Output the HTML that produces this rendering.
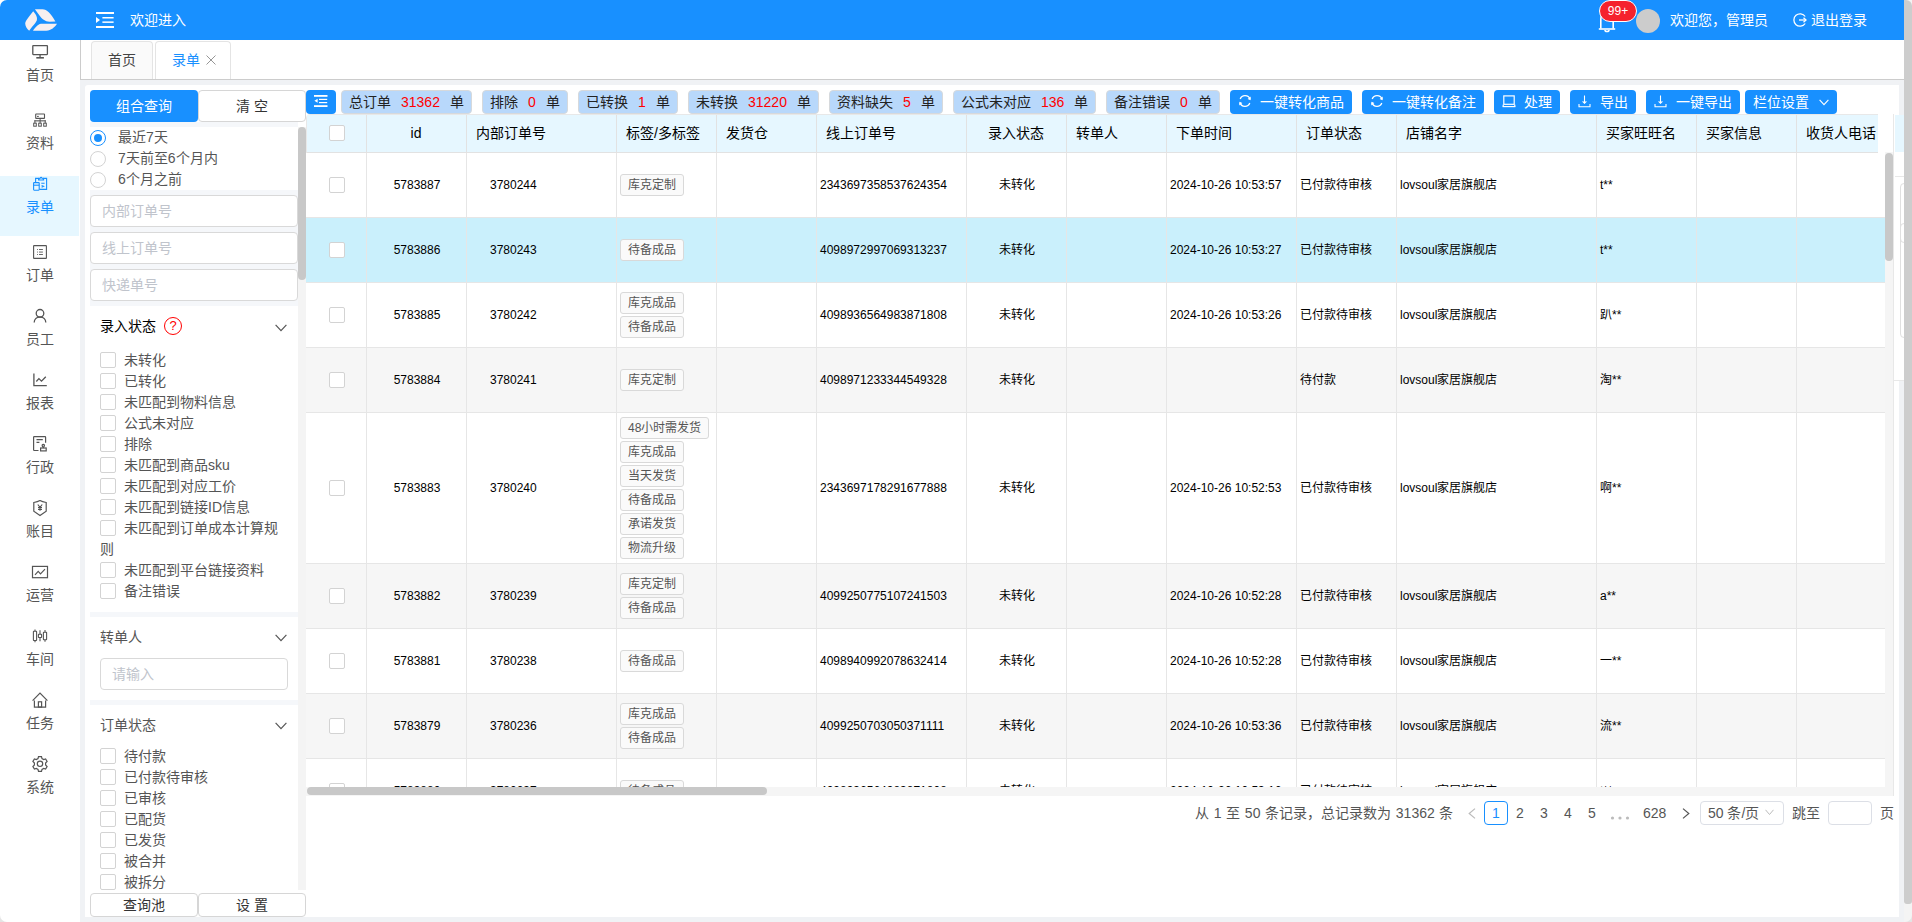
<!DOCTYPE html><html lang="zh-CN"><head><meta charset="utf-8"><style>
*{box-sizing:border-box;margin:0;padding:0}
html,body{width:1912px;height:922px;overflow:hidden}
body{position:relative;background:#f0f2f5;font-family:"Liberation Sans", sans-serif;font-size:14px;color:#333}
.a{position:absolute}
.t{position:absolute;white-space:nowrap}
.cb{position:absolute;width:16px;height:16px;border:1px solid #d3d3d3;border-radius:2px;background:#fff}
.rad{position:absolute;width:16px;height:16px;border:1px solid #d3d3d3;border-radius:50%;background:#fff}
.inp{position:absolute;border:1px solid #d9d9d9;border-radius:4px;background:#fff;color:#c0c4cc;font-size:14px}
.strip{position:absolute;background:#f5f7fa}
.tg{position:absolute;top:90px;height:24px;background:#b8d8fb;border:1px solid #d6d9dc;border-radius:4px;line-height:22px;font-size:14px;color:#222}
.tg b{font-weight:normal;color:#ff0000}
.bb{position:absolute;top:90px;height:24px;background:#1890ff;border-radius:4px;line-height:24px;font-size:14px;color:#fff}
.hd{position:absolute;top:114px;height:38px;line-height:38px;font-size:14px;color:#000}
.cell{position:absolute;font-size:12px;color:#000;white-space:nowrap}
.tag{position:absolute;height:22px;line-height:20px;border:1px solid #d9d9d9;border-radius:3px;background:#fafafa;color:#555;font-size:12px;padding:0 7px;white-space:nowrap}
</style></head><body>

<div class="a" style="left:0;top:0;width:1912px;height:40px;background:#fff"></div>
<div class="a" style="left:1904px;top:914px;width:8px;height:8px;background:#e4e4e4"></div>
<div class="a" style="left:0;top:0;width:1904px;height:40px;background:#1890ff;border-top-left-radius:7px"></div>
<svg class="a" style="left:20px;top:4px" width="44" height="32" viewBox="0 0 44 32"><g fill="#f7eff0">
<path d="M13.2,7.3 C11,10 5.2,17 5.2,19.5 C5.3,22 7,25 9.2,26.7 C12,23 16,18.5 16.8,16.5 C17.5,14 16.8,11.5 13.2,7.3 Z"/>
<path d="M14.9,5.2 L22.5,5.2 C27,5.5 30.5,9 35.4,17.5 L29.5,17.7 C25,17.5 22,15 19.5,11.5 Z"/>
<path d="M13,26.7 C15,24 17.5,20.3 21,19.8 L37,19.8 C35,23 31,26.7 26.4,26.7 Z"/>
</g></svg>
<svg class="a" style="left:96px;top:12px" width="18" height="16" viewBox="0 0 18 16"><g fill="#fff">
<rect x="0" y="0" width="18" height="2"/><rect x="6.4" y="5" width="11.2" height="1.5"/><rect x="6.4" y="9.4" width="11.2" height="1.5"/><rect x="0" y="14" width="18" height="2"/>
<path d="M0,4.9 L4,7.9 L0,10.9 Z"/></g></svg>
<div class="t" style="left:130px;top:10px;line-height:20px;font-size:14px;color:#fff">欢迎进入</div>
<svg class="a" style="left:1597px;top:10px" width="20" height="24" viewBox="0 0 20 24"><g fill="none" stroke="#fff" stroke-width="1.6">
<path d="M3.8,18.5 L3.8,9 C3.8,5 6.5,3 10,3 C13.5,3 16.2,5 16.2,9 L16.2,18.5"/><path d="M1.8,19 L18.2,19"/><path d="M8,20 C8,22 12,22 12,20"/></g></svg>
<div class="a" style="left:1599px;top:0px;width:38px;height:22px;border:1px solid #fff;border-radius:11px;background:#f5222d;color:#fff;font-size:12px;line-height:20px;text-align:center">99+</div>
<div class="a" style="left:1636px;top:9px;width:24px;height:24px;border-radius:50%;background:#cccccc"></div>
<div class="t" style="left:1670px;top:10px;line-height:20px;font-size:14px;color:#fff">欢迎您，管理员</div>
<svg class="a" style="left:1792px;top:12px" width="16" height="16" viewBox="0 0 16 16"><g fill="none" stroke="#fff" stroke-width="1.3">
<path d="M13.2,4.5 A6.2,6.2 0 1 0 13.2,11.5"/><path d="M7,8 L14,8"/><path d="M11.5,5.8 L14,8 L11.5,10.2"/></g></svg>
<div class="t" style="left:1811px;top:10px;line-height:20px;font-size:14px;color:#fff">退出登录</div>
<div class="a" style="left:0;top:900px;width:20px;height:22px;background:#e4e4e4"></div>
<div class="a" style="left:0;top:40px;width:80px;height:882px;background:#fff;border-bottom-left-radius:7px"></div>
<div class="a" style="left:0;top:176px;width:79px;height:60px;background:#e6f7ff"></div>
<svg class="a" style="left:28px;top:40px" width="24" height="24" viewBox="0 0 24 24"><rect x="4.8" y="5.6" width="14.6" height="9" rx="0.5" fill="none" stroke="#555" stroke-width="1.3"/><rect x="11.4" y="14.6" width="1.3" height="2.6" fill="#555"/><rect x="8.3" y="17" width="7.6" height="1.6" fill="#555"/></svg>
<div class="t" style="left:0;width:80px;text-align:center;top:65px;line-height:20px;font-size:14px;color:#555">首页</div>
<svg class="a" style="left:28px;top:108px" width="24" height="24" viewBox="0 0 24 24"><rect x="7.7" y="6" width="8.8" height="4.4" rx="0.5" fill="none" stroke="#555" stroke-width="1.1"/><rect x="9" y="7.9" width="1.8" height="1" fill="#555"/><rect x="11.6" y="10.4" width="1" height="2" fill="#555"/><rect x="6.4" y="12.3" width="11.3" height="1.1" fill="#555"/><rect x="6.4" y="12.3" width="1" height="2.8" fill="#555"/><rect x="11.6" y="12.3" width="1" height="2.8" fill="#555"/><rect x="16.7" y="12.3" width="1" height="2.8" fill="#555"/><rect x="5.7" y="15.2" width="2.6" height="3" fill="none" stroke="#555" stroke-width="1"/><rect x="10.7" y="15.2" width="2.6" height="3" fill="none" stroke="#555" stroke-width="1"/><rect x="15.7" y="15.2" width="2.6" height="3" fill="none" stroke="#555" stroke-width="1"/></svg>
<div class="t" style="left:0;width:80px;text-align:center;top:133px;line-height:20px;font-size:14px;color:#555">资料</div>
<svg class="a" style="left:28px;top:172px" width="24" height="24" viewBox="0 0 24 24"><g fill="none" stroke="#1890ff" stroke-width="1.1"><path d="M7.6,9.9 L7.6,6.4 L10.6,6.4 L10.6,8 L15.6,8 L15.6,6.4 L18.6,6.4 L18.6,17.4 L11.4,17.4"/><path d="M10.9,7.8 L11.2,6.2 L12.3,6.2 C12.6,5 13.6,5 13.9,6.2 L15,6.2 L15.3,7.8"/><rect x="5.6" y="10.6" width="5.6" height="7.6" rx="0.6"/><path d="M5.6,13.2 L11.2,13.2"/><path d="M13.3,11.3 L16.6,11.3 M13.6,13.6 L15.5,14.3 L13.6,15.2"/></g></svg>
<div class="t" style="left:0;width:80px;text-align:center;top:197px;line-height:20px;font-size:14px;color:#1890ff">录单</div>
<svg class="a" style="left:28px;top:240px" width="24" height="24" viewBox="0 0 24 24"><rect x="5.6" y="5.6" width="12.8" height="12.8" rx="0.5" fill="none" stroke="#555" stroke-width="1.1"/><g fill="#555"><rect x="9" y="9" width="0.9" height="0.9"/><rect x="9" y="11.6" width="0.9" height="0.9"/><rect x="9" y="14" width="0.9" height="0.9"/><rect x="11" y="9" width="3.9" height="0.9"/><rect x="11" y="11.6" width="3.9" height="0.9"/><rect x="11" y="14" width="3.9" height="0.9"/></g></svg>
<div class="t" style="left:0;width:80px;text-align:center;top:265px;line-height:20px;font-size:14px;color:#555">订单</div>
<svg class="a" style="left:28px;top:304px" width="24" height="24" viewBox="0 0 24 24"><g fill="none" stroke="#555" stroke-width="1.3"><circle cx="12" cy="9.3" r="3.8"/><path d="M6.2,18.6 C6.2,15 8.8,13 12,13 C15.2,13 17.8,15 17.8,18.6"/></g></svg>
<div class="t" style="left:0;width:80px;text-align:center;top:329px;line-height:20px;font-size:14px;color:#555">员工</div>
<svg class="a" style="left:28px;top:368px" width="24" height="24" viewBox="0 0 24 24"><g fill="none" stroke="#555" stroke-width="1.3"><path d="M5.9,5.4 L5.9,17.6 L18.8,17.6"/><path d="M8.3,13.5 L10.9,10.6 L13.5,13.2 L17.8,8.8"/></g></svg>
<div class="t" style="left:0;width:80px;text-align:center;top:393px;line-height:20px;font-size:14px;color:#555">报表</div>
<svg class="a" style="left:28px;top:432px" width="24" height="24" viewBox="0 0 24 24"><g fill="none" stroke="#555" stroke-width="1.2"><path d="M10.5,18.5 L6.3,18.5 C5.9,18.5 5.6,18.2 5.6,17.8 L5.6,5.2 C5.6,4.8 5.9,4.6 6.3,4.6 L17,4.6 C17.4,4.6 17.6,4.8 17.6,5.2 L17.6,10.8"/><path d="M8.5,7.6 L14.8,7.6 M8.5,10.4 L11.4,10.4"/><path d="M15.3,15.5 C14,14.2 13.5,12.6 15.3,12.4 C17.1,12.6 16.6,14.2 15.3,15.5 Z"/><rect x="12.6" y="16" width="5.6" height="2.9"/></g></svg>
<div class="t" style="left:0;width:80px;text-align:center;top:457px;line-height:20px;font-size:14px;color:#555">行政</div>
<svg class="a" style="left:28px;top:496px" width="24" height="24" viewBox="0 0 24 24"><g fill="none" stroke="#555" stroke-width="1.2"><path d="M12,4.6 C10.5,5.5 8,6.2 5.8,6.5 L5.8,15.3 L12,19.6 L18.2,15.3 L18.2,6.5 C16,6.2 13.5,5.5 12,4.6 Z"/><path d="M9.8,8.5 L12,11.3 L14.2,8.5 M12,11.3 L12,14.8 M10,11.6 L14,11.6 M10,13.5 L14,13.5"/></g></svg>
<div class="t" style="left:0;width:80px;text-align:center;top:521px;line-height:20px;font-size:14px;color:#555">账目</div>
<svg class="a" style="left:28px;top:560px" width="24" height="24" viewBox="0 0 24 24"><g fill="none" stroke="#555" stroke-width="1.2"><rect x="4.5" y="6.4" width="15" height="11.3"/><path d="M7,14.8 L10.2,11.3 L12.5,13.8 L17,9.1"/></g></svg>
<div class="t" style="left:0;width:80px;text-align:center;top:585px;line-height:20px;font-size:14px;color:#555">运营</div>
<svg class="a" style="left:28px;top:624px" width="24" height="24" viewBox="0 0 24 24"><g fill="none" stroke="#555" stroke-width="1.1"><rect x="5.4" y="7.3" width="3.2" height="9.2" rx="0.4"/><path d="M7,5.6 L7,7.3 M7,16.5 L7,18.2"/><rect x="10.4" y="10.3" width="3.2" height="3.2" rx="0.4"/><path d="M12,6.2 L12,10.3 M12,13.5 L12,17.2"/><rect x="15.4" y="8.2" width="3.2" height="7.5" rx="0.4"/><path d="M17,6 L17,8.2 M17,15.7 L17,17.8"/></g></svg>
<div class="t" style="left:0;width:80px;text-align:center;top:649px;line-height:20px;font-size:14px;color:#555">车间</div>
<svg class="a" style="left:28px;top:688px" width="24" height="24" viewBox="0 0 24 24"><g fill="none" stroke="#555" stroke-width="1.2"><path d="M4.6,12.6 L12,5 L19.4,12.6"/><path d="M6.4,12.4 L6.4,19.1 L17.6,19.1 L17.6,12.4"/><rect x="10.4" y="13.8" width="3.2" height="5.3"/></g></svg>
<div class="t" style="left:0;width:80px;text-align:center;top:713px;line-height:20px;font-size:14px;color:#555">任务</div>
<svg class="a" style="left:28px;top:752px" width="24" height="24" viewBox="0 0 24 24"><g fill="none" stroke="#555" stroke-width="1.2"><path d="M10.5,4.6 L13.5,4.6 L14,6.6 L15.7,7.6 L17.6,7 L19.1,9.5 L17.6,11 L17.6,13 L19.1,14.5 L17.6,17 L15.7,16.4 L14,17.4 L13.5,19.4 L10.5,19.4 L10,17.4 L8.3,16.4 L6.4,17 L4.9,14.5 L6.4,13 L6.4,11 L4.9,9.5 L6.4,7 L8.3,7.6 L10,6.6 Z"/><circle cx="12" cy="11.8" r="2.7"/></g></svg>
<div class="t" style="left:0;width:80px;text-align:center;top:777px;line-height:20px;font-size:14px;color:#555">系统</div>
<div class="a" style="left:80px;top:40px;width:1824px;height:40px;background:#fff;border-left:1px solid #cccccc;border-bottom:1px solid #cccccc"></div>
<div class="a" style="left:91px;top:41px;width:62px;height:38px;background:#fafafa;border:1px solid #e4e4e4;border-bottom:none;border-radius:4px 4px 0 0"></div>
<div class="t" style="left:108px;top:50px;line-height:20px;font-size:14px;color:#444">首页</div>
<div class="a" style="left:155px;top:41px;width:76px;height:38px;background:#fff;border:1px solid #e4e4e4;border-bottom:none;border-radius:4px 4px 0 0"></div>
<div class="t" style="left:172px;top:50px;line-height:20px;font-size:14px;color:#1890ff">录单</div>
<svg class="a" style="left:206px;top:55px" width="10" height="10" viewBox="0 0 10 10"><path d="M0.5,0.5 L9.5,9.5 M9.5,0.5 L0.5,9.5" stroke="#8a8a8a" stroke-width="0.9"/></svg>
<div class="a" style="left:85px;top:85px;width:221px;height:832px;background:#fff;border-radius:3px 0 0 0"></div>
<div class="a" style="left:90px;top:90px;width:108px;height:32px;background:#1890ff;border-radius:4px;color:#fff;text-align:center;line-height:32px;font-size:14px">组合查询</div>
<div class="a" style="left:198px;top:90px;width:108px;height:32px;background:#fff;border:1px solid #d6d6d6;border-radius:4px;color:#333;text-align:center;line-height:30px;font-size:14px">清 空</div>
<div class="strip" style="left:90px;top:122px;width:208px;height:5px"></div>
<div class="rad" style="left:90px;top:130px;border-color:#1890ff"><div class="a" style="left:3px;top:3px;width:8px;height:8px;border-radius:50%;background:#1890ff"></div></div>
<div class="t" style="left:118px;top:127px;line-height:20px;color:#555">最近7天</div>
<div class="rad" style="left:90px;top:151px"></div>
<div class="t" style="left:118px;top:148px;line-height:20px;color:#555">7天前至6个月内</div>
<div class="rad" style="left:90px;top:172px"></div>
<div class="t" style="left:118px;top:169px;line-height:20px;color:#555">6个月之前</div>
<div class="strip" style="left:90px;top:190px;width:208px;height:116px"></div>
<div class="inp" style="left:90px;top:195px;width:208px;height:32px;line-height:30px;padding-left:11px">内部订单号</div>
<div class="inp" style="left:90px;top:232px;width:208px;height:32px;line-height:30px;padding-left:11px">线上订单号</div>
<div class="inp" style="left:90px;top:269px;width:208px;height:32px;line-height:30px;padding-left:11px">快递单号</div>
<div class="t" style="left:100px;top:316px;line-height:20px;color:#000">录入状态</div>
<div class="a" style="left:164px;top:317px;width:18px;height:18px;border:1.5px solid #f00;border-radius:50%;color:#f00;font-size:13px;line-height:15px;text-align:center">?</div>
<svg class="a" style="left:275px;top:324px" width="12" height="8" viewBox="0 0 12 8"><path d="M0.6,0.8 L6,6.6 L11.4,0.8" fill="none" stroke="#555" stroke-width="1.2"/></svg>
<div class="cb" style="left:100px;top:352px"></div>
<div class="t" style="left:124px;top:350px;line-height:20px;color:#555">未转化</div>
<div class="cb" style="left:100px;top:373px"></div>
<div class="t" style="left:124px;top:371px;line-height:20px;color:#555">已转化</div>
<div class="cb" style="left:100px;top:394px"></div>
<div class="t" style="left:124px;top:392px;line-height:20px;color:#555">未匹配到物料信息</div>
<div class="cb" style="left:100px;top:415px"></div>
<div class="t" style="left:124px;top:413px;line-height:20px;color:#555">公式未对应</div>
<div class="cb" style="left:100px;top:436px"></div>
<div class="t" style="left:124px;top:434px;line-height:20px;color:#555">排除</div>
<div class="cb" style="left:100px;top:457px"></div>
<div class="t" style="left:124px;top:455px;line-height:20px;color:#555">未匹配到商品sku</div>
<div class="cb" style="left:100px;top:478px"></div>
<div class="t" style="left:124px;top:476px;line-height:20px;color:#555">未匹配到对应工价</div>
<div class="cb" style="left:100px;top:499px"></div>
<div class="t" style="left:124px;top:497px;line-height:20px;color:#555">未匹配到链接ID信息</div>
<div class="cb" style="left:100px;top:520px"></div>
<div class="t" style="left:124px;top:518px;line-height:20px;color:#555">未匹配到订单成本计算规</div>
<div class="t" style="left:100px;top:539px;line-height:20px;color:#555">则</div>
<div class="cb" style="left:100px;top:562px"></div>
<div class="t" style="left:124px;top:560px;line-height:20px;color:#555">未匹配到平台链接资料</div>
<div class="cb" style="left:100px;top:583px"></div>
<div class="t" style="left:124px;top:581px;line-height:20px;color:#555">备注错误</div>
<div class="strip" style="left:90px;top:612px;width:208px;height:5px"></div>
<div class="t" style="left:100px;top:627px;line-height:20px;color:#555">转单人</div>
<svg class="a" style="left:275px;top:634px" width="12" height="8" viewBox="0 0 12 8"><path d="M0.6,0.8 L6,6.6 L11.4,0.8" fill="none" stroke="#555" stroke-width="1.2"/></svg>
<div class="inp" style="left:100px;top:658px;width:188px;height:32px;line-height:30px;padding-left:11px">请输入</div>
<div class="strip" style="left:90px;top:700px;width:208px;height:5px"></div>
<div class="t" style="left:100px;top:715px;line-height:20px;color:#555">订单状态</div>
<svg class="a" style="left:275px;top:722px" width="12" height="8" viewBox="0 0 12 8"><path d="M0.6,0.8 L6,6.6 L11.4,0.8" fill="none" stroke="#555" stroke-width="1.2"/></svg>
<div class="a" style="left:85px;top:740px;width:213px;height:152px;overflow:hidden">
<div class="cb" style="left:15px;top:8px"></div>
<div class="t" style="left:39px;top:6px;line-height:20px;color:#555">待付款</div>
<div class="cb" style="left:15px;top:29px"></div>
<div class="t" style="left:39px;top:27px;line-height:20px;color:#555">已付款待审核</div>
<div class="cb" style="left:15px;top:50px"></div>
<div class="t" style="left:39px;top:48px;line-height:20px;color:#555">已审核</div>
<div class="cb" style="left:15px;top:71px"></div>
<div class="t" style="left:39px;top:69px;line-height:20px;color:#555">已配货</div>
<div class="cb" style="left:15px;top:92px"></div>
<div class="t" style="left:39px;top:90px;line-height:20px;color:#555">已发货</div>
<div class="cb" style="left:15px;top:113px"></div>
<div class="t" style="left:39px;top:111px;line-height:20px;color:#555">被合并</div>
<div class="cb" style="left:15px;top:134px"></div>
<div class="t" style="left:39px;top:132px;line-height:20px;color:#555">被拆分</div>
</div>
<div class="a" style="left:298px;top:127px;width:8px;height:763px;background:#f4f4f4"></div>
<div class="a" style="left:298px;top:127px;width:8px;height:153px;background:#c8c8c8;border-radius:4px"></div>
<div class="a" style="left:90px;top:893px;width:108px;height:24px;background:#fff;border:1px solid #d6d6d6;border-radius:4px;color:#333;text-align:center;line-height:22px;font-size:14px">查询池</div>
<div class="a" style="left:198px;top:893px;width:108px;height:24px;background:#fff;border:1px solid #d6d6d6;border-radius:4px;color:#333;text-align:center;line-height:22px;font-size:14px">设 置</div>
<div class="a" style="left:306px;top:85px;width:1593px;height:832px;background:#fff"></div>
<div class="a" style="left:306px;top:90px;width:30px;height:24px;background:#1890ff;border-radius:4px"></div>
<svg class="a" style="left:314px;top:95px" width="14" height="12" viewBox="0 0 14 12"><g fill="#fff"><rect x="0" y="0" width="13.5" height="1.8"/><rect x="5" y="3.8" width="8.2" height="1.2"/><rect x="5" y="7" width="8.2" height="1.2"/><rect x="0" y="10.2" width="13.5" height="1.8"/><path d="M3.6,3.8 L0.4,5.8 L3.6,7.8 Z"/></g></svg>
<div class="tg" style="left:341px;width:131px;padding-left:7px">总订单<b style="margin-left:10px">31362</b><span style="margin-left:10px">单</span></div>
<div class="tg" style="left:482px;width:86px;padding-left:7px">排除<b style="margin-left:10px">0</b><span style="margin-left:10px">单</span></div>
<div class="tg" style="left:578px;width:100px;padding-left:7px">已转换<b style="margin-left:10px">1</b><span style="margin-left:10px">单</span></div>
<div class="tg" style="left:688px;width:131px;padding-left:7px">未转换<b style="margin-left:10px">31220</b><span style="margin-left:10px">单</span></div>
<div class="tg" style="left:829px;width:114px;padding-left:7px">资料缺失<b style="margin-left:10px">5</b><span style="margin-left:10px">单</span></div>
<div class="tg" style="left:953px;width:143px;padding-left:7px">公式未对应<b style="margin-left:10px">136</b><span style="margin-left:10px">单</span></div>
<div class="tg" style="left:1106px;width:114px;padding-left:7px">备注错误<b style="margin-left:10px">0</b><span style="margin-left:10px">单</span></div>
<div class="bb" style="left:1230px;width:122px"><svg class="a" style="left:8px;top:4px" width="14" height="14" viewBox="0 0 14 14"><g fill="none" stroke="#fff" stroke-width="1.3"><path d="M12,5.3 A5.2,5.2 0 0 0 2.2,5"/><path d="M2,8.7 A5.2,5.2 0 0 0 11.8,9"/></g><g fill="#fff"><path d="M12.8,2.6 L12.6,6.2 L9.6,5 Z"/><path d="M1.2,11.4 L1.4,7.8 L4.4,9 Z"/></g></svg><span class="t" style="left:30px;top:0">一键转化商品</span></div>
<div class="bb" style="left:1362px;width:122px"><svg class="a" style="left:8px;top:4px" width="14" height="14" viewBox="0 0 14 14"><g fill="none" stroke="#fff" stroke-width="1.3"><path d="M12,5.3 A5.2,5.2 0 0 0 2.2,5"/><path d="M2,8.7 A5.2,5.2 0 0 0 11.8,9"/></g><g fill="#fff"><path d="M12.8,2.6 L12.6,6.2 L9.6,5 Z"/><path d="M1.2,11.4 L1.4,7.8 L4.4,9 Z"/></g></svg><span class="t" style="left:30px;top:0">一键转化备注</span></div>
<div class="bb" style="left:1494px;width:66px"><svg class="a" style="left:8px;top:5px" width="14" height="13" viewBox="0 0 14 13"><g fill="none" stroke="#fff" stroke-width="1.2"><rect x="1.8" y="0.9" width="10.4" height="8.4"/><path d="M0.6,11.6 L13.4,11.6"/></g><rect x="0.6" y="9.6" width="1.2" height="2" fill="#fff"/><rect x="12.2" y="9.6" width="1.2" height="2" fill="#fff"/></svg><span class="t" style="left:30px;top:0">处理</span></div>
<div class="bb" style="left:1570px;width:66px"><svg class="a" style="left:8px;top:5px" width="13" height="13" viewBox="0 0 13 13"><g fill="none" stroke="#fff" stroke-width="1.1"><path d="M6.5,0.5 L6.5,8.2"/><path d="M4.6,6.3 L6.5,8.2 L8.4,6.3"/><path d="M1,9 L1,11.8 L12,11.8 L12,9"/></g></svg><span class="t" style="left:30px;top:0">导出</span></div>
<div class="bb" style="left:1646px;width:94px"><svg class="a" style="left:8px;top:5px" width="13" height="13" viewBox="0 0 13 13"><g fill="none" stroke="#fff" stroke-width="1.1"><path d="M6.5,0.5 L6.5,8.2"/><path d="M4.6,6.3 L6.5,8.2 L8.4,6.3"/><path d="M1,9 L1,11.8 L12,11.8 L12,9"/></g></svg><span class="t" style="left:30px;top:0">一键导出</span></div>
<div class="bb" style="left:1745px;width:92px"><span class="t" style="left:8px;top:0">栏位设置</span><svg class="a" style="left:74px;top:9px" width="10" height="7" viewBox="0 0 10 7"><path d="M0.6,0.8 L5,5.6 L9.4,0.8" fill="none" stroke="#fff" stroke-width="1.1"/></svg></div>
<div class="a" style="left:306px;top:114px;width:1587px;height:682px;border:1px solid #e8e8e8;border-radius:4px 4px 0 0"></div>
<div class="a" style="left:307px;top:115px;width:1571px;height:38px;background:#e6f7ff;border-bottom:1px solid #e2e2e2"></div>
<div class="a" style="left:306px;top:153px;width:1579px;height:634px;overflow:hidden">
<div class="a" style="left:0;top:0px;width:1579px;height:65px;background:#fff;border-bottom:1px solid #e6e6e6"></div>
<div class="cb" style="left:23px;top:23.5px"></div>
<div class="cell" style="left:61px;width:100px;text-align:center;top:23.5px;line-height:16px">5783887</div>
<div class="cell" style="left:184px;top:23.5px;line-height:16px">3780244</div>
<div class="tag" style="left:314px;top:21px">库克定制</div>
<div class="cell" style="left:514px;top:23.5px;line-height:16px">2343697358537624354</div>
<div class="cell" style="left:661px;width:100px;text-align:center;top:23.5px;line-height:16px">未转化</div>
<div class="cell" style="left:864px;top:23.5px;line-height:16px">2024-10-26 10:53:57</div>
<div class="cell" style="left:994px;top:23.5px;line-height:16px">已付款待审核</div>
<div class="cell" style="left:1094px;top:23.5px;line-height:16px">lovsoul家居旗舰店</div>
<div class="cell" style="left:1294px;top:23.5px;line-height:16px">t**</div>
<div class="a" style="left:0;top:65px;width:1579px;height:65px;background:#caf0fc;border-bottom:1px solid #e6e6e6"></div>
<div class="cb" style="left:23px;top:88.5px"></div>
<div class="cell" style="left:61px;width:100px;text-align:center;top:88.5px;line-height:16px">5783886</div>
<div class="cell" style="left:184px;top:88.5px;line-height:16px">3780243</div>
<div class="tag" style="left:314px;top:86px">待备成品</div>
<div class="cell" style="left:514px;top:88.5px;line-height:16px">4098972997069313237</div>
<div class="cell" style="left:661px;width:100px;text-align:center;top:88.5px;line-height:16px">未转化</div>
<div class="cell" style="left:864px;top:88.5px;line-height:16px">2024-10-26 10:53:27</div>
<div class="cell" style="left:994px;top:88.5px;line-height:16px">已付款待审核</div>
<div class="cell" style="left:1094px;top:88.5px;line-height:16px">lovsoul家居旗舰店</div>
<div class="cell" style="left:1294px;top:88.5px;line-height:16px">t**</div>
<div class="a" style="left:0;top:130px;width:1579px;height:65px;background:#fff;border-bottom:1px solid #e6e6e6"></div>
<div class="cb" style="left:23px;top:153.5px"></div>
<div class="cell" style="left:61px;width:100px;text-align:center;top:153.5px;line-height:16px">5783885</div>
<div class="cell" style="left:184px;top:153.5px;line-height:16px">3780242</div>
<div class="tag" style="left:314px;top:139px">库克成品</div>
<div class="tag" style="left:314px;top:163px">待备成品</div>
<div class="cell" style="left:514px;top:153.5px;line-height:16px">4098936564983871808</div>
<div class="cell" style="left:661px;width:100px;text-align:center;top:153.5px;line-height:16px">未转化</div>
<div class="cell" style="left:864px;top:153.5px;line-height:16px">2024-10-26 10:53:26</div>
<div class="cell" style="left:994px;top:153.5px;line-height:16px">已付款待审核</div>
<div class="cell" style="left:1094px;top:153.5px;line-height:16px">lovsoul家居旗舰店</div>
<div class="cell" style="left:1294px;top:153.5px;line-height:16px">趴**</div>
<div class="a" style="left:0;top:195px;width:1579px;height:65px;background:#f6f6f6;border-bottom:1px solid #e6e6e6"></div>
<div class="cb" style="left:23px;top:218.5px"></div>
<div class="cell" style="left:61px;width:100px;text-align:center;top:218.5px;line-height:16px">5783884</div>
<div class="cell" style="left:184px;top:218.5px;line-height:16px">3780241</div>
<div class="tag" style="left:314px;top:216px">库克定制</div>
<div class="cell" style="left:514px;top:218.5px;line-height:16px">4098971233344549328</div>
<div class="cell" style="left:661px;width:100px;text-align:center;top:218.5px;line-height:16px">未转化</div>
<div class="cell" style="left:864px;top:218.5px;line-height:16px"></div>
<div class="cell" style="left:994px;top:218.5px;line-height:16px">待付款</div>
<div class="cell" style="left:1094px;top:218.5px;line-height:16px">lovsoul家居旗舰店</div>
<div class="cell" style="left:1294px;top:218.5px;line-height:16px">淘**</div>
<div class="a" style="left:0;top:260px;width:1579px;height:151px;background:#fff;border-bottom:1px solid #e6e6e6"></div>
<div class="cb" style="left:23px;top:326.5px"></div>
<div class="cell" style="left:61px;width:100px;text-align:center;top:326.5px;line-height:16px">5783883</div>
<div class="cell" style="left:184px;top:326.5px;line-height:16px">3780240</div>
<div class="tag" style="left:314px;top:264px">48小时需发货</div>
<div class="tag" style="left:314px;top:288px">库克成品</div>
<div class="tag" style="left:314px;top:312px">当天发货</div>
<div class="tag" style="left:314px;top:336px">待备成品</div>
<div class="tag" style="left:314px;top:360px">承诺发货</div>
<div class="tag" style="left:314px;top:384px">物流升级</div>
<div class="cell" style="left:514px;top:326.5px;line-height:16px">2343697178291677888</div>
<div class="cell" style="left:661px;width:100px;text-align:center;top:326.5px;line-height:16px">未转化</div>
<div class="cell" style="left:864px;top:326.5px;line-height:16px">2024-10-26 10:52:53</div>
<div class="cell" style="left:994px;top:326.5px;line-height:16px">已付款待审核</div>
<div class="cell" style="left:1094px;top:326.5px;line-height:16px">lovsoul家居旗舰店</div>
<div class="cell" style="left:1294px;top:326.5px;line-height:16px">啊**</div>
<div class="a" style="left:0;top:411px;width:1579px;height:65px;background:#f6f6f6;border-bottom:1px solid #e6e6e6"></div>
<div class="cb" style="left:23px;top:434.5px"></div>
<div class="cell" style="left:61px;width:100px;text-align:center;top:434.5px;line-height:16px">5783882</div>
<div class="cell" style="left:184px;top:434.5px;line-height:16px">3780239</div>
<div class="tag" style="left:314px;top:420px">库克定制</div>
<div class="tag" style="left:314px;top:444px">待备成品</div>
<div class="cell" style="left:514px;top:434.5px;line-height:16px">4099250775107241503</div>
<div class="cell" style="left:661px;width:100px;text-align:center;top:434.5px;line-height:16px">未转化</div>
<div class="cell" style="left:864px;top:434.5px;line-height:16px">2024-10-26 10:52:28</div>
<div class="cell" style="left:994px;top:434.5px;line-height:16px">已付款待审核</div>
<div class="cell" style="left:1094px;top:434.5px;line-height:16px">lovsoul家居旗舰店</div>
<div class="cell" style="left:1294px;top:434.5px;line-height:16px">a**</div>
<div class="a" style="left:0;top:476px;width:1579px;height:65px;background:#fff;border-bottom:1px solid #e6e6e6"></div>
<div class="cb" style="left:23px;top:499.5px"></div>
<div class="cell" style="left:61px;width:100px;text-align:center;top:499.5px;line-height:16px">5783881</div>
<div class="cell" style="left:184px;top:499.5px;line-height:16px">3780238</div>
<div class="tag" style="left:314px;top:497px">待备成品</div>
<div class="cell" style="left:514px;top:499.5px;line-height:16px">4098940992078632414</div>
<div class="cell" style="left:661px;width:100px;text-align:center;top:499.5px;line-height:16px">未转化</div>
<div class="cell" style="left:864px;top:499.5px;line-height:16px">2024-10-26 10:52:28</div>
<div class="cell" style="left:994px;top:499.5px;line-height:16px">已付款待审核</div>
<div class="cell" style="left:1094px;top:499.5px;line-height:16px">lovsoul家居旗舰店</div>
<div class="cell" style="left:1294px;top:499.5px;line-height:16px">一**</div>
<div class="a" style="left:0;top:541px;width:1579px;height:65px;background:#f6f6f6;border-bottom:1px solid #e6e6e6"></div>
<div class="cb" style="left:23px;top:564.5px"></div>
<div class="cell" style="left:61px;width:100px;text-align:center;top:564.5px;line-height:16px">5783879</div>
<div class="cell" style="left:184px;top:564.5px;line-height:16px">3780236</div>
<div class="tag" style="left:314px;top:550px">库克成品</div>
<div class="tag" style="left:314px;top:574px">待备成品</div>
<div class="cell" style="left:514px;top:564.5px;line-height:16px">4099250703050371111</div>
<div class="cell" style="left:661px;width:100px;text-align:center;top:564.5px;line-height:16px">未转化</div>
<div class="cell" style="left:864px;top:564.5px;line-height:16px">2024-10-26 10:53:36</div>
<div class="cell" style="left:994px;top:564.5px;line-height:16px">已付款待审核</div>
<div class="cell" style="left:1094px;top:564.5px;line-height:16px">lovsoul家居旗舰店</div>
<div class="cell" style="left:1294px;top:564.5px;line-height:16px">流**</div>
<div class="a" style="left:0;top:606px;width:1579px;height:65px;background:#fff;border-bottom:1px solid #e6e6e6"></div>
<div class="cb" style="left:23px;top:629.5px"></div>
<div class="cell" style="left:61px;width:100px;text-align:center;top:629.5px;line-height:16px">5783880</div>
<div class="cell" style="left:184px;top:629.5px;line-height:16px">3780237</div>
<div class="tag" style="left:314px;top:627px">待备成品</div>
<div class="cell" style="left:514px;top:629.5px;line-height:16px">4098936564983871808</div>
<div class="cell" style="left:661px;width:100px;text-align:center;top:629.5px;line-height:16px">未转化</div>
<div class="cell" style="left:864px;top:629.5px;line-height:16px">2024-10-26 10:53:16</div>
<div class="cell" style="left:994px;top:629.5px;line-height:16px">已付款待审核</div>
<div class="cell" style="left:1094px;top:629.5px;line-height:16px">lovsoul家居旗舰店</div>
<div class="cell" style="left:1294px;top:629.5px;line-height:16px">t**</div>
<div class="a" style="left:60px;top:0;width:1px;height:634px;background:#e6e6e6"></div>
<div class="a" style="left:160px;top:0;width:1px;height:634px;background:#e6e6e6"></div>
<div class="a" style="left:310px;top:0;width:1px;height:634px;background:#e6e6e6"></div>
<div class="a" style="left:410px;top:0;width:1px;height:634px;background:#e6e6e6"></div>
<div class="a" style="left:510px;top:0;width:1px;height:634px;background:#e6e6e6"></div>
<div class="a" style="left:660px;top:0;width:1px;height:634px;background:#e6e6e6"></div>
<div class="a" style="left:760px;top:0;width:1px;height:634px;background:#e6e6e6"></div>
<div class="a" style="left:860px;top:0;width:1px;height:634px;background:#e6e6e6"></div>
<div class="a" style="left:990px;top:0;width:1px;height:634px;background:#e6e6e6"></div>
<div class="a" style="left:1090px;top:0;width:1px;height:634px;background:#e6e6e6"></div>
<div class="a" style="left:1290px;top:0;width:1px;height:634px;background:#e6e6e6"></div>
<div class="a" style="left:1390px;top:0;width:1px;height:634px;background:#e6e6e6"></div>
<div class="a" style="left:1490px;top:0;width:1px;height:634px;background:#e6e6e6"></div>
</div>
<div class="a" style="left:366px;top:115px;width:1px;height:37px;background:#e2e2e2"></div>
<div class="a" style="left:466px;top:115px;width:1px;height:37px;background:#e2e2e2"></div>
<div class="a" style="left:616px;top:115px;width:1px;height:37px;background:#e2e2e2"></div>
<div class="a" style="left:716px;top:115px;width:1px;height:37px;background:#e2e2e2"></div>
<div class="a" style="left:816px;top:115px;width:1px;height:37px;background:#e2e2e2"></div>
<div class="a" style="left:966px;top:115px;width:1px;height:37px;background:#e2e2e2"></div>
<div class="a" style="left:1066px;top:115px;width:1px;height:37px;background:#e2e2e2"></div>
<div class="a" style="left:1166px;top:115px;width:1px;height:37px;background:#e2e2e2"></div>
<div class="a" style="left:1296px;top:115px;width:1px;height:37px;background:#e2e2e2"></div>
<div class="a" style="left:1396px;top:115px;width:1px;height:37px;background:#e2e2e2"></div>
<div class="a" style="left:1596px;top:115px;width:1px;height:37px;background:#e2e2e2"></div>
<div class="a" style="left:1696px;top:115px;width:1px;height:37px;background:#e2e2e2"></div>
<div class="a" style="left:1796px;top:115px;width:1px;height:37px;background:#e2e2e2"></div>
<div class="cb" style="left:329px;top:125px"></div>
<div class="hd" style="left:366px;width:100px;text-align:center">id</div>
<div class="hd" style="left:476px">内部订单号</div>
<div class="hd" style="left:626px">标签/多标签</div>
<div class="hd" style="left:726px">发货仓</div>
<div class="hd" style="left:826px">线上订单号</div>
<div class="hd" style="left:966px;width:100px;text-align:center">录入状态</div>
<div class="hd" style="left:1076px">转单人</div>
<div class="hd" style="left:1176px">下单时间</div>
<div class="hd" style="left:1306px">订单状态</div>
<div class="hd" style="left:1406px">店铺名字</div>
<div class="hd" style="left:1606px">买家旺旺名</div>
<div class="hd" style="left:1706px">买家信息</div>
<div class="hd" style="left:1806px">收货人电话</div>
<div class="a" style="left:1878px;top:114px;width:15px;height:38px;background:#fff"></div>
<div class="a" style="left:1893px;top:114px;width:6px;height:682px;background:#fff;border-left:1px solid #e8e8e8"></div>
<div class="a" style="left:1894px;top:115px;width:10px;height:266px;background:#fff;border-bottom:1px solid #e8e8e8"></div>
<div class="a" style="left:1895px;top:115px;width:9px;height:37px;background:#e6f7ff"></div>
<div class="a" style="left:1895px;top:176px;width:9px;height:1px;background:#e8e8e8"></div>
<div class="a" style="left:1900px;top:183px;width:8px;height:60px;border:1px solid #e0e0e0;border-radius:4px"></div>
<div class="a" style="left:1900px;top:223px;width:8px;height:115px;border:1px solid #e0e0e0;border-radius:4px"></div>
<div class="a" style="left:1885px;top:152px;width:8px;height:643px;background:#f5f5f5"></div>
<div class="a" style="left:1885px;top:153px;width:8px;height:108px;background:#c8c8c8;border-radius:4px"></div>
<div class="a" style="left:306px;top:787px;width:1587px;height:9px;background:#f5f5f5"></div>
<div class="a" style="left:307px;top:787px;width:460px;height:8px;background:#c8c8c8;border-radius:4px"></div>
<div class="t" style="left:1195px;top:803px;line-height:20px;word-spacing:0.8px;color:#555">从 1 至 50 条记录，总记录数为 31362 条</div>
<svg class="a" style="left:1468px;top:808px" width="8" height="11" viewBox="0 0 8 11"><path d="M7,0.6 L1.2,5.5 L7,10.4" fill="none" stroke="#bbb" stroke-width="1.2"/></svg>
<div class="a" style="left:1484px;top:801px;width:24px;height:24px;border:1px solid #1890ff;border-radius:4px;color:#1890ff;text-align:center;line-height:22px;font-size:14px">1</div>
<div class="t" style="left:1508px;width:24px;text-align:center;top:803px;line-height:20px;color:#555">2</div>
<div class="t" style="left:1532px;width:24px;text-align:center;top:803px;line-height:20px;color:#555">3</div>
<div class="t" style="left:1556px;width:24px;text-align:center;top:803px;line-height:20px;color:#555">4</div>
<div class="t" style="left:1580px;width:24px;text-align:center;top:803px;line-height:20px;color:#555">5</div>
<svg class="a" style="left:1609px;top:814px" width="22" height="8" viewBox="0 0 22 8"><g fill="#bbb"><circle cx="3.5" cy="4" r="1.6"/><circle cx="11" cy="4" r="1.6"/><circle cx="18.5" cy="4" r="1.6"/></g></svg>
<div class="t" style="left:1643px;top:803px;line-height:20px;color:#555">628</div>
<svg class="a" style="left:1682px;top:808px" width="8" height="11" viewBox="0 0 8 11"><path d="M1,0.6 L6.8,5.5 L1,10.4" fill="none" stroke="#555" stroke-width="1.2"/></svg>
<div class="a" style="left:1700px;top:801px;width:84px;height:24px;border:1px solid #dcdfe6;border-radius:4px"></div>
<div class="t" style="left:1708px;top:803px;line-height:20px;color:#555">50 条/页</div>
<svg class="a" style="left:1765px;top:809px" width="9" height="7" viewBox="0 0 9 7"><path d="M0.5,0.8 L4.5,5.5 L8.5,0.8" fill="none" stroke="#bbb" stroke-width="1"/></svg>
<div class="t" style="left:1792px;top:803px;line-height:20px;color:#555">跳至</div>
<div class="a" style="left:1828px;top:801px;width:44px;height:24px;border:1px solid #dcdfe6;border-radius:4px"></div>
<div class="t" style="left:1880px;top:803px;line-height:20px;color:#555">页</div>
<div class="a" style="left:1904px;top:0;width:8px;height:922px;background:#f4f4f4;border-bottom-right-radius:7px"></div>
<div class="a" style="left:1904px;top:0;width:8px;height:904px;background:#cdcdcd;border-radius:0 6px 3px 3px"></div>
</body></html>
